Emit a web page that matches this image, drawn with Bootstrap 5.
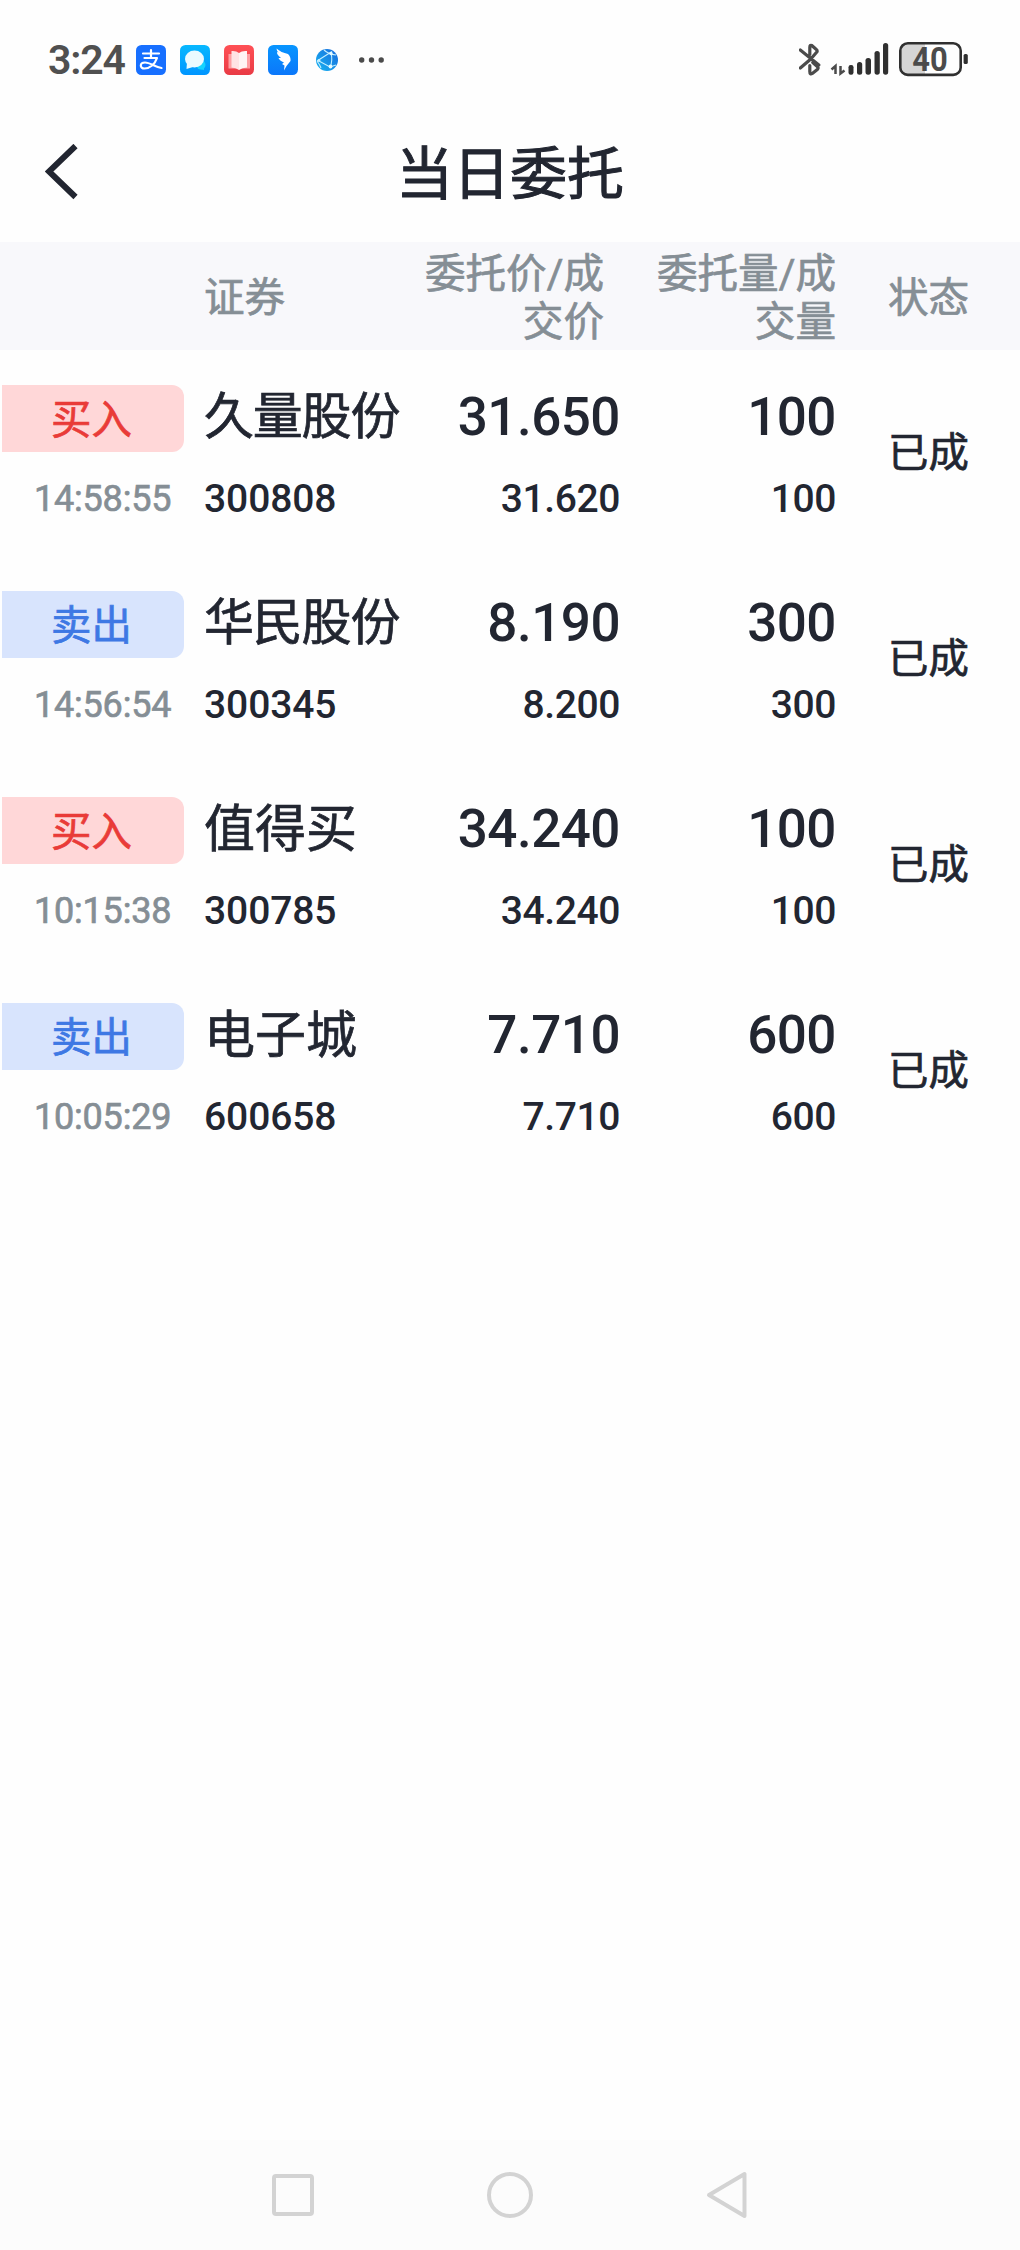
<!DOCTYPE html>
<html lang="zh-CN">
<head>
<meta charset="utf-8">
<meta name="viewport" content="width=device-width, initial-scale=1">
<title>当日委托</title>
<link rel="stylesheet" href="https://cdn.jsdelivr.net/npm/bootstrap@5.3.0/dist/css/bootstrap.min.css">
<style>
body{font-family:Roboto,"Noto Sans CJK SC",sans-serif;color:#222631;background:#fefefe;font-weight:500}
.screen{height:2250px}
.status-bar{height:120px;padding:0 49px 0 48px;color:#505050}
.clock{font-size:41px;line-height:60px;font-weight:600;width:88px;letter-spacing:-1.2px}
.status-bar svg{display:block;flex:none}
.batt-text{font-family:Roboto,sans-serif;font-size:33px;font-weight:700}
.title-bar{height:122px;padding-left:45px}
.title-bar h1{font-size:57px;line-height:109px;font-weight:400;-webkit-text-stroke:1px currentColor;width:228px;margin:0 0 0 317px;white-space:nowrap}
.zh{font-weight:400;-webkit-text-stroke:.7px currentColor;white-space:nowrap}
.list-head{height:108px;padding-top:3px;background:#f8f8fb;color:#858e95;font-size:40.6px;line-height:48px}
.order{height:206px;padding-top:35px}
.c-side{width:184px}
.c-name{width:205px;padding-left:20px}
.c-price{width:231px}
.c-qty{width:216px}
.c-state{width:184px;padding-left:52px}
.side-tag{height:67px;margin-left:2px;padding-left:49px;border-radius:0 12px 12px 0;font-size:40.4px;line-height:71px}
.buy{background:#ffd7d8;color:#e93b38}
.sell{background:#d8e4fd;color:#3e78e4}
.stamp{font-size:36px;line-height:46px;margin-top:24px;padding-left:34px;color:#858e95;font-weight:400;-webkit-text-stroke:.7px currentColor;letter-spacing:-.2px}
.stock{font-size:51px;line-height:65px}
.stock.four{font-size:50px;letter-spacing:-1.2px}
.num-big{font-size:53px;line-height:64px;letter-spacing:-.5px}
.num-small{font-size:39px;line-height:46px;margin-top:27px;letter-spacing:-.4px}
.code{margin-top:26px;letter-spacing:-.1px}
.done{font-size:40.4px;line-height:48px;margin-top:45px}
.nav-keys{height:110px;background:#fcfcfc;padding:30px 272px 0}
</style>
</head>
<body>
<div class="screen d-flex flex-column">
  <header class="status-bar d-flex align-items-center">
    <div class="clock">3:24</div>
    <svg width="260" height="40" viewBox="0 0 260 40">
      <defs>
        <linearGradient id="g1" x2="0" y2="1"><stop stop-color="#08b8ff"/><stop offset="1" stop-color="#0095ff"/></linearGradient>
        <linearGradient id="g2" x2="0" y2="1"><stop stop-color="#ff5055"/><stop offset="1" stop-color="#e93b45"/></linearGradient>
        <linearGradient id="g3" x2="0" y2="1"><stop stop-color="#0795ff"/><stop offset="1" stop-color="#0b77fa"/></linearGradient>
        <linearGradient id="g4" x1="0" y1="1" x2="1" y2="0"><stop stop-color="#18b5f2"/><stop offset="1" stop-color="#1769dc"/></linearGradient>
      </defs>
      <rect y="5" width="30" height="30" rx="5.5" fill="#176fff"/>
      <g fill="none" stroke="#fff" stroke-width="2.2" stroke-linecap="round" stroke-linejoin="round"><path d="M7 13.5H23M15 10V18M8.5 18H21C19 24 14 28.5 8.5 28.5C3.500 28.500 3.500 22.500 9 22.500C14 22.500 19 27 25.500 28"/></g>
      <rect x="44" y="5" width="30" height="30" rx="5.500" fill="url(#g1)"/>
      <circle cx="65" cy="25" r="4.500" fill="#14d4ff"/><path d="M68 30L64 29L68 26Z" fill="#14d4ff"/>
      <ellipse cx="58.500" cy="19" rx="9.500" ry="8.500" fill="#eafaff"/><path d="M51 22L50.500 29L57 27Z" fill="#eafaff"/>
      <rect x="88" y="5" width="30" height="30" rx="5.500" fill="url(#g2)"/>
      <path d="M92.500 14H114V28.500H92.500Z" fill="#ff9ea2"/><path d="M95.500 11Q100 10.500 103 13V30Q100 27.500 95.500 27.500Z" fill="#ffe3e4"/><path d="M111 11Q106 10.500 103 13V30Q106 27.500 111 27.500Z" fill="#fff4f4"/>
      <rect x="132" y="5" width="30" height="30" rx="5.500" fill="url(#g3)"/>
      <path d="M140.500 8.500Q145 12.500 152 14Q155 17 154.500 21L150.500 26L148 30.500L148.500 25.500L146 24L148 22.500Q143.500 20.500 142.500 18L145 18Q140.500 14.500 141 12L142.500 12.500Q140.500 10.500 140.500 8.500Z" fill="#fff"/>
      <circle cx="191" cy="20" r="11" fill="url(#g4)"/>
      <g stroke="#c4efff" stroke-width="1.100" fill="none"><path d="M181 21L196 11.500M182 20.500L194 27L200 25M195 13Q197 20 194 28M181 21Q184 25 185 28M188 10Q192 14 200 15"/></g>
      <circle cx="195" cy="13.500" r="1.700" fill="#e6faff"/><circle cx="194.500" cy="26.500" r="1.900" fill="#e6faff"/><circle cx="183" cy="20.500" r="1.400" fill="#c4efff"/>
      <g fill="#4b4b4b"><circle cx="225.700" cy="20" r="2.700"/><circle cx="235.500" cy="20" r="2.700"/><circle cx="245.200" cy="20" r="2.700"/></g>
    </svg>
    <svg class="ms-auto" width="172" height="40" viewBox="0 0 172 40">
      <path d="M3.500 9.500L22 24.500M3.500 27.500L14 18.500L20 11.500Q21 10 19 8.500L15 5Q13 4 13 7V14M13 25V31Q13 34.500 15.500 33L20.500 29Q22 27.500 20.500 26L16 22" fill="none" stroke="#4b4b4b" stroke-width="3.200" stroke-linecap="round" stroke-linejoin="round" transform="translate(-2.200 .500)"/>
      <path d="M32.500 29.500L36.500 26V34M41.500 26V33.500L45.500 30.500" fill="none" stroke="#4b4b4b" stroke-width="2.500"/>
      <g fill="#303030"><rect x="49.500" y="25" width="5" height="9.700" rx="2.200"/><rect x="58" y="22" width="5.200" height="12.700" rx="2.500"/><rect x="66.500" y="18" width="5.500" height="16.700" rx="2.600"/><rect x="75.500" y="11" width="5.300" height="23.700" rx="2.600"/><rect x="84" y="3" width="5.200" height="31.700" rx="2.600"/></g>
      <path d="M110 3H126V35H110Q102 35 102 27V11Q102 3 110 3Z" fill="#d5d5d5"/>
      <rect x="101.300" y="3.300" width="60.400" height="31.600" rx="7.500" fill="none" stroke="#303030" stroke-width="2.600"/>
      <rect x="164.600" y="14" width="4.200" height="10" rx="1.600" fill="#303030"/>
      <text class="batt-text" x="131" y="30.800" text-anchor="middle" fill="#4b4b4b" textLength="35.500" lengthAdjust="spacingAndGlyphs">40</text>
    </svg>
  </header>

  <div class="title-bar d-flex">
    <svg width="34" height="60" viewBox="0 0 34 60" class="mt-4 flex-shrink-0"><path d="M30.500 2L4 27.500L30.500 53" fill="none" stroke="#222631" stroke-width="6"/></svg>
    <h1>当日委托</h1>
  </div>

  <div class="list-head d-flex align-items-center flex-shrink-0 zh">
    <div class="c-side"></div>
    <div class="c-name">证券</div>
    <div class="c-price text-end"><div class="pe-3">委托价/成<br>交价</div></div>
    <div class="c-qty text-end">委托量/成<br>交量</div>
    <div class="c-state">状态</div>
  </div>

  <main class="flex-grow-1">
    <div class="order d-flex">
      <div class="c-side"><div class="side-tag buy zh">买入</div><div class="stamp">14:58:55</div></div>
      <div class="c-name"><div class="stock four zh">久量股份</div><div class="num-small code">300808</div></div>
      <div class="c-price text-end"><div class="num-big">31.650</div><div class="num-small">31.620</div></div>
      <div class="c-qty text-end"><div class="num-big">100</div><div class="num-small">100</div></div>
      <div class="c-state"><div class="done zh">已成</div></div>
    </div>
    <div class="order d-flex">
      <div class="c-side"><div class="side-tag sell zh">卖出</div><div class="stamp">14:56:54</div></div>
      <div class="c-name"><div class="stock four zh">华民股份</div><div class="num-small code">300345</div></div>
      <div class="c-price text-end"><div class="num-big">8.190</div><div class="num-small">8.200</div></div>
      <div class="c-qty text-end"><div class="num-big">300</div><div class="num-small">300</div></div>
      <div class="c-state"><div class="done zh">已成</div></div>
    </div>
    <div class="order d-flex">
      <div class="c-side"><div class="side-tag buy zh">买入</div><div class="stamp">10:15:38</div></div>
      <div class="c-name"><div class="stock zh">值得买</div><div class="num-small code">300785</div></div>
      <div class="c-price text-end"><div class="num-big">34.240</div><div class="num-small">34.240</div></div>
      <div class="c-qty text-end"><div class="num-big">100</div><div class="num-small">100</div></div>
      <div class="c-state"><div class="done zh">已成</div></div>
    </div>
    <div class="order d-flex">
      <div class="c-side"><div class="side-tag sell zh">卖出</div><div class="stamp">10:05:29</div></div>
      <div class="c-name"><div class="stock zh">电子城</div><div class="num-small code">600658</div></div>
      <div class="c-price text-end"><div class="num-big">7.710</div><div class="num-small">7.710</div></div>
      <div class="c-qty text-end"><div class="num-big">600</div><div class="num-small">600</div></div>
      <div class="c-state"><div class="done zh">已成</div></div>
    </div>
  </main>

  <nav class="nav-keys d-flex justify-content-between flex-shrink-0">
    <svg width="42" height="50" viewBox="0 0 42 50"><rect x="2" y="6" width="38" height="38" rx="2" fill="none" stroke="#d3d3d3" stroke-width="4"/></svg>
    <svg width="46" height="50" viewBox="0 0 46 50"><circle cx="23" cy="25" r="21" fill="none" stroke="#d3d3d3" stroke-width="4"/></svg>
    <svg width="42" height="50" viewBox="0 0 42 50"><path d="M38.500 4V46L3 25Z" fill="none" stroke="#d3d3d3" stroke-width="4" stroke-linejoin="round"/></svg>
  </nav>
</div>
<script src="https://cdn.jsdelivr.net/npm/bootstrap@5.3.0/dist/js/bootstrap.bundle.min.js"></script>
</body>
</html>
